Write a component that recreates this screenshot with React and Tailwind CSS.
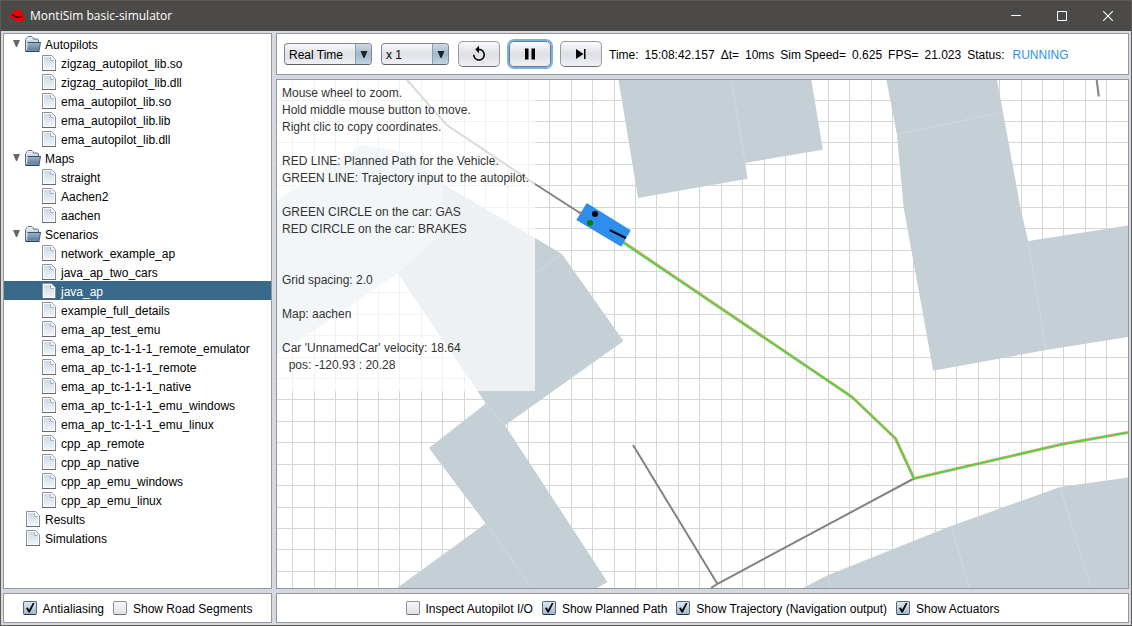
import { useId, useState } from "react";

const TREE = [
  {
    name: "Autopilots",
    children: [
      "zigzag_autopilot_lib.so",
      "zigzag_autopilot_lib.dll",
      "ema_autopilot_lib.so",
      "ema_autopilot_lib.lib",
      "ema_autopilot_lib.dll",
    ],
  },
  { name: "Maps", children: ["straight", "Aachen2", "aachen"] },
  {
    name: "Scenarios",
    children: [
      "network_example_ap",
      "java_ap_two_cars",
      "java_ap",
      "example_full_details",
      "ema_ap_test_emu",
      "ema_ap_tc-1-1-1_remote_emulator",
      "ema_ap_tc-1-1-1_remote",
      "ema_ap_tc-1-1-1_native",
      "ema_ap_tc-1-1-1_emu_windows",
      "ema_ap_tc-1-1-1_emu_linux",
      "cpp_ap_remote",
      "cpp_ap_native",
      "cpp_ap_emu_windows",
      "cpp_ap_emu_linux",
    ],
  },
  { name: "Results" },
  { name: "Simulations" },
];

const INFO = [
  "Mouse wheel to zoom.",
  "Hold middle mouse button to move.",
  "Right clic to copy coordinates.",
  "",
  "RED LINE: Planned Path for the Vehicle.",
  "GREEN LINE: Trajectory input to the autopilot.",
  "",
  "GREEN CIRCLE on the car: GAS",
  "RED CIRCLE on the car: BRAKES",
  "",
  "",
  "Grid spacing: 2.0",
  "",
  "Map: aachen",
  "",
  "Car 'UnnamedCar' velocity: 18.64",
  "  pos: -120.93 : 20.28",
];

const GRID = 21.42;
const VERTICALS = Array.from({ length: 100 }, (_, i) => Math.floor(292.8 + i * GRID));
const HORIZONTALS = Array.from({ length: 60 }, (_, i) => Math.floor(100.1 + i * GRID));

function HatLogo() {
  return (
    <svg width="16" height="14" viewBox="0 0 16 14" className="shrink-0" aria-hidden="true">
      <path
        d="M3.2 6 4.700 1.900C5 .9 5.700.7 6.600 1c1 .4 1.500.3 2.400 0 1.400-.6 2.600-.2 3.100 1l1.200 4c1.800.8 2.700 1.900 2.600 3.200-.1 2-2.300 3.200-5.200 3C6.100 11.900.6 9.200.3 6.900.3 5.900 1.500 5.500 3.200 6z"
        fill="#f00000"
      />
      <path d="M3.100 6.100c1.200 2 5.400 3.600 9 2.500.9-.3 1.300-.8 1.100-1.500l-.1-.5c-.8 1-2.700 1.200-4.500.9C6.400 7.100 4.300 6.200 3.500 5.100z" fill="#1c1210" />
    </svg>
  );
}

function FolderIcon() {
  const id = useId();
  return (
    <svg width="16" height="16" viewBox="0 0 16 16" className="shrink-0" aria-hidden="true">
      <defs>
        <linearGradient id={id} x1="0" y1="0" x2="0" y2="1">
          <stop offset="0" stopColor="#9db3c8" />
          <stop offset="1" stopColor="#5f7d9c" />
        </linearGradient>
      </defs>
      <path d="M.5 15V3.500l1-1 .5-1 1-1h4l1 1 .5 1.500h4l1 1V15z" fill="#cfdbe6" stroke="#5d7288" />
      <path d="M2.500 1.500h5M1.500 3.500h6" stroke="#eef4f9" />
      <path d="M2 14.500 3 6.500h12.500L14.200 14.500z" fill={`url(#${id})`} />
      <path d="M2.500 6.500H16" stroke="#3a516c" />
      <path d="M15.500 6.500 14 15" stroke="#4a627e" />
      <path d="M.5 15.500h14" stroke="#2b4159" />
    </svg>
  );
}

function FileIcon() {
  const id = useId();
  return (
    <svg width="14" height="16" viewBox="0 0 14 16" className="shrink-0" aria-hidden="true">
      <defs>
        <linearGradient id={id} x1="0" y1="0" x2="0" y2="1">
          <stop offset="0" stopColor="#cbdae7" />
          <stop offset="1" stopColor="#f0f4f9" />
        </linearGradient>
      </defs>
      <path d="M.5.500h9l4 4v11H.5z" fill="#fbfcfe" stroke="#8d9096" />
      <path d="M2 2h6l4 4v8H2z" fill={`url(#${id})`} />
      <path d="M8 1h1.500l3.500 3.500V6H8z" fill="#f6f9fc" />
      <path d="M8.500 2v3.500H12" fill="none" stroke="#9cb3ca" />
      <path d="M0 15.500h14" stroke="#666970" />
    </svg>
  );
}

function TreeRow({ label, leaf, nested, open, selected, onClick }) {
  return (
    <button
      type="button"
      onClick={onClick}
      className={`flex h-[19px] w-full items-center text-left whitespace-nowrap ${nested ? "pl-4" : ""} ${
        selected ? "bg-[#39698a] text-white" : "text-black"
      }`}
    >
      <span className="flex w-[21px] shrink-0 justify-end pr-[5px]">
        {!leaf && (
          <svg width="7" height="7" viewBox="0 0 7 7" className={open ? "" : "-rotate-90"} aria-hidden="true">
            <path d="M0 0h7L4 7H3z" fill="#666" />
          </svg>
        )}
      </span>
      <span className="mr-1 flex w-4 shrink-0 justify-center pt-px">{leaf ? <FileIcon /> : <FolderIcon />}</span>
      <span className="pt-[2px]">{label}</span>
    </button>
  );
}

function FileTree() {
  const [closed, setClosed] = useState({});
  const [selected, setSelected] = useState("java_ap");
  return (
    <ul>
      {TREE.map(({ name, children }) => (
        <li key={name}>
          <TreeRow
            label={name}
            leaf={!children}
            open={!closed[name]}
            selected={selected === name}
            onClick={() =>
              children ? setClosed((c) => ({ ...c, [name]: !c[name] })) : setSelected(name)
            }
          />
          {children && !closed[name] && (
            <ul>
              {children.map((child) => (
                <li key={child}>
                  <TreeRow
                    label={child}
                    leaf
                    nested
                    selected={selected === child}
                    onClick={() => setSelected(child)}
                  />
                </li>
              ))}
            </ul>
          )}
        </li>
      ))}
    </ul>
  );
}

function Check({ label, checked = false }) {
  return (
    <label className="flex items-center gap-1.5 whitespace-nowrap">
      <span className="grid size-3.5 shrink-0">
        <input
          type="checkbox"
          defaultChecked={checked}
          className="peer col-start-1 row-start-1 size-3.5 appearance-none rounded-[2px] border border-[#8d8f96] border-b-[#6d6f76] bg-linear-to-b from-[#f8f8fa] to-[#dfe1e6] checked:border-[#52677c] checked:border-b-[#1f3347] checked:from-[#dde7f0] checked:to-[#a3bacd]"
        />
        <svg
          viewBox="0 0 14 14"
          className="pointer-events-none invisible col-start-1 row-start-1 size-3.5 peer-checked:visible"
          aria-hidden="true"
        >
          <path d="M3 7 4.700 6.500 6.100 8.800 9.800 2h1.700L6.900 11.500H5.500z" fill="#000" />
        </svg>
      </span>
      <span className="pt-[2px]">{label}</span>
    </label>
  );
}

function Combo({ label, options, size }) {
  return (
    <span
      className={`grid h-[22px] shrink-0 overflow-hidden rounded border border-[#83868f] border-b-[#5b5f68] bg-linear-to-b from-[#f9f9fb] via-[#dfe1e7] to-[#eef0f4] ${size}`}
    >
      <select
        aria-label={label}
        className="col-start-1 row-start-1 w-full appearance-none bg-transparent pt-[2px] pl-1 text-black outline-none"
      >
        {options.map((o) => (
          <option key={o}>{o}</option>
        ))}
      </select>
      <span className="pointer-events-none col-start-1 row-start-1 flex w-4 items-center justify-center justify-self-end border-l border-[#8a9fb3] bg-linear-to-b from-[#cedae5] via-[#a2b8cb] to-[#bfd3e3]">
        <svg width="8" height="7" viewBox="0 0 8 7" aria-hidden="true">
          <path d="M.5 0h7L4.500 7h-1z" fill="#222" />
        </svg>
      </span>
    </span>
  );
}

function ToolButton({ label, focused, children }) {
  return (
    <button
      type="button"
      aria-label={label}
      className={`flex h-[26px] w-[42px] shrink-0 items-center justify-center rounded-[5px] border bg-linear-to-b from-[#fbfbfc] via-[#dddfe5] to-[#f0f1f5] ${
        focused
          ? "border-[#5c7ea0] ring-2 ring-[#7fb0dc]"
          : "border-[#999ba2] border-b-[#6e7179]"
      }`}
    >
      {children}
    </button>
  );
}

function Toolbar() {
  return (
    <header className="flex h-[42px] shrink-0 items-center gap-[7px] overflow-hidden border border-[#9297a1] bg-white px-[7px]">
      <div className="flex items-center gap-[9px]">
        <Combo label="Simulation mode" options={["Real Time", "Max Speed"]} size="w-[88px]" />
        <Combo label="Speed factor" options={["x 1", "x 2", "x 4"]} size="w-[68px]" />
        <ToolButton label="Restart">
          <svg width="18" height="18" viewBox="0 0 24 24" aria-hidden="true">
            <path d="M12 5V1L7 6l5 5V7c3.310 0 6 2.690 6 6s-2.690 6-6 6-6-2.690-6-6H4c0 4.420 3.580 8 8 8s8-3.580 8-8-3.580-8-8-8z" />
          </svg>
        </ToolButton>
        <ToolButton label="Pause" focused>
          <svg width="10" height="12" viewBox="0 0 10 12" aria-hidden="true">
            <path d="M0 .5h3.500v11H0zM6.500.5H10v11H6.500z" />
          </svg>
        </ToolButton>
        <ToolButton label="Step">
          <svg width="10" height="10" viewBox="0 0 10 10" aria-hidden="true">
            <path d="M0 0 7.500 5 0 10zM8 0h1.500v10H8z" />
          </svg>
        </ToolButton>
      </div>
      <div className="flex gap-1.5 pt-[2px] whitespace-nowrap">
        <span>Time:</span>
        <span>15:08:42.157</span>
        <span>Δt=</span>
        <span>10ms</span>
        <span>Sim Speed=</span>
        <span>0.625</span>
        <span>FPS=</span>
        <span>21.023</span>
        <span>Status:</span>
        <span className="pl-[2px] text-[#2f8fee]">RUNNING</span>
      </div>
    </header>
  );
}

function MapView() {
  return (
    <main className="relative min-h-0 flex-1 overflow-hidden border border-[#9297a1] bg-white">
      <svg className="absolute inset-0 h-full w-full" role="img" aria-label="Map aachen">
        <g transform="translate(-277 -80)">
          <g fill="#d6d6d6">
            {VERTICALS.map((x) => (
              <rect key={x} x={x} y="80" width="1" height="1300" />
            ))}
            {HORIZONTALS.map((y) => (
              <rect key={y} x="277" y={y} width="2200" height="1" />
            ))}
          </g>
          <path d="M277 200.700 362 145l50 8.500L443 184v48l-45 41.500L277 355z" fill="#d3dfe6" />
          <g fill="#c5d0d6">
            <path d="M443 184 535 238l27 16 61.500 87-118.500 84.500L607.500 582 597 588H397l88.700-64.500L429 448l57-44.500L397.700 273.500 443 232z" />
            <path d="M618.500 80 638 198l109.600-19.300-2.400-15.700 77.600-13.300L811.400 80z" />
            <path d="M886.400 80l10.500 54.500L903.700 208l29.500 162.700L1046 350l82-13V225.500L1028.200 241l-7.400-31L1003 112 997 80z" />
            <path d="M803 588l24-12.500L951 526l109-39 68-9.500V588z" />
          </g>
          <g fill="none" stroke="#d3dce0" strokeWidth="0.8">
            <path d="M562 254 443 339M486 403.500 505 425.500M485.700 523.500 532 588" />
            <path d="M731.300 80 745.200 163M897 134.500 1003 112M1028.200 241 1046 350" />
            <path d="M827 575.500 831 588M951 526 969.500 588M1060 487 1091 588" />
          </g>
          <g fill="none" stroke="#828282" strokeWidth="2">
            <path d="M407 80 446.700 125 535 184 580 213" />
            <path d="M633 445 717.500 584M711 588 718 583.500 914 478.500" />
            <path d="M1096.700 80 1098.800 96.500" />
          </g>
          <g fill="none" strokeLinejoin="round">
            <path d="M579 212 852 397 895.500 438.500 914 478.500 1063 444 1128 432.500" stroke="#d9796c" strokeOpacity="0.75" strokeWidth="3" />
            <path d="M622 242 852 397 895.500 438.500 914 478.500 1063 444 1128 432.500" stroke="#42e030" strokeWidth="1.7" />
          </g>
          <path d="M586.700 203 630.700 230.300 621.300 246.700 576.300 220z" fill="#2e8eec" />
          <circle cx="595" cy="214" r="3" fill="#000" />
          <circle cx="590" cy="223" r="3" fill="#0c7c0c" />
          <path d="M609.800 230.200 625.800 238" stroke="#000" strokeWidth="2" />
        </g>
      </svg>
      <div className="absolute top-0 left-0 h-[311px] w-[258px] bg-white/70 pt-[5px] pl-[5px] text-[12px] leading-[17px] whitespace-pre text-[#333]">
        {INFO.map((line, i) => (
          <p key={i} className="h-[17px]">
            {line}
          </p>
        ))}
      </div>
    </main>
  );
}

function TitleBar() {
  const control = "flex h-full w-[46px] items-center justify-center";
  return (
    <div className="flex h-[31px] shrink-0 items-center border-t border-[#5c5b59] bg-[#4b4a48] pl-2 text-white">
      <HatLogo />
      <h1 className="ml-[5px] flex-1 font-['Open_Sans','Noto_Sans',sans-serif] text-[12px] whitespace-nowrap">
        MontiSim basic-simulator
      </h1>
      <button type="button" aria-label="Minimize" className={control}>
        <svg width="10" height="10" viewBox="0 0 10 10" fill="none" stroke="#fff" aria-hidden="true">
          <path d="M0 4.500h10" />
        </svg>
      </button>
      <button type="button" aria-label="Maximize" className={control}>
        <svg width="10" height="10" viewBox="0 0 10 10" fill="none" stroke="#fff" aria-hidden="true">
          <path d="M.5.5h9v9h-9z" />
        </svg>
      </button>
      <button type="button" aria-label="Close" className={control}>
        <svg width="10" height="10" viewBox="0 0 10 10" fill="none" stroke="#fff" strokeWidth="1.100" aria-hidden="true">
          <path d="M0 0l10 10M10 0 0 10" />
        </svg>
      </button>
    </div>
  );
}

export default function App() {
  return (
    <div className="flex h-screen flex-col border-x border-b border-[#5c5b59] bg-[#d6d9e0] font-['Liberation_Sans',Arial,sans-serif] text-[12px] text-black">
      <TitleBar />
      <div className="flex min-h-0 flex-1 gap-1 p-[2px]">
        <div className="flex w-[269px] shrink-0 flex-col gap-1">
          <nav aria-label="Resources" className="min-h-0 flex-1 overflow-hidden border border-[#9297a1] bg-white">
            <FileTree />
          </nav>
          <footer className="flex h-[30px] shrink-0 items-center justify-center gap-[9px] border border-[#9297a1] bg-white">
            <Check label="Antialiasing" checked />
            <Check label="Show Road Segments" />
          </footer>
        </div>
        <div className="flex min-w-0 flex-1 flex-col gap-1">
          <Toolbar />
          <MapView />
          <footer className="flex h-[30px] shrink-0 items-center justify-center gap-[9px] border border-[#9297a1] bg-white">
            <Check label="Inspect Autopilot I/O" />
            <Check label="Show Planned Path" checked />
            <Check label="Show Trajectory (Navigation output)" checked />
            <Check label="Show Actuators" checked />
          </footer>
        </div>
      </div>
    </div>
  );
}
